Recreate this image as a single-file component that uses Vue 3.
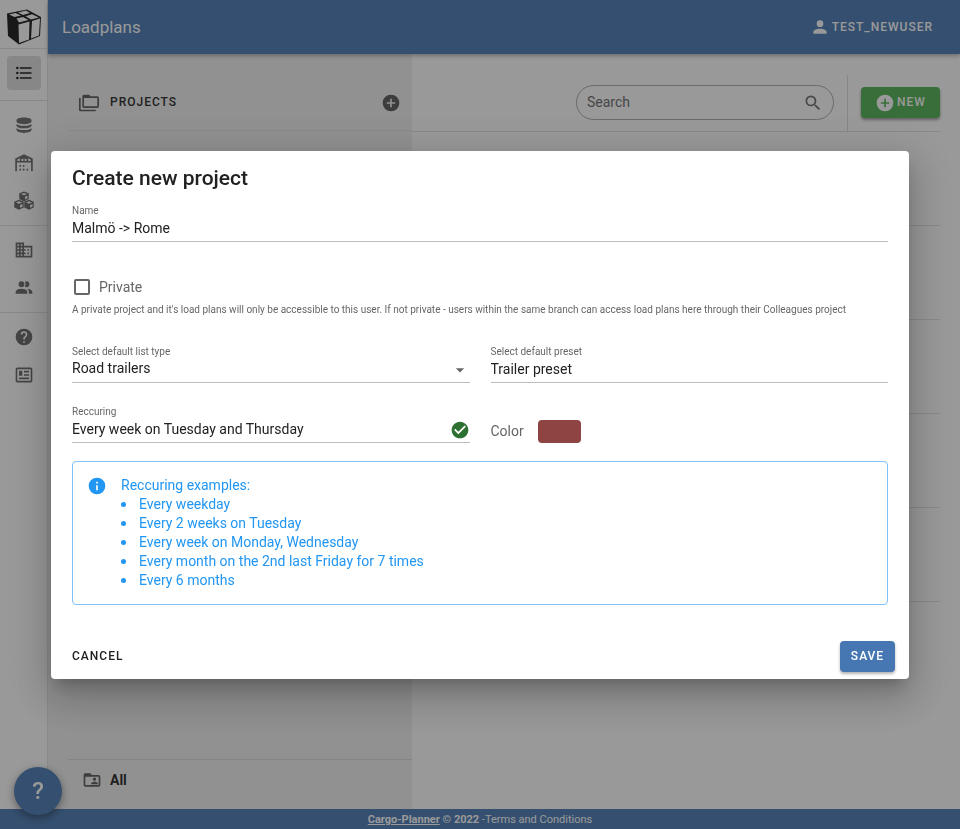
<script setup>
import { ref } from 'vue'

const circle = 'M12,2A10,10 0 0,0 2,12A10,10 0 0,0 12,22A10,10 0 0,0 22,12A10,10 0 0,0 12,2Z'
const icons = {
  plus: 'M17,13H13V17H11V13H7V11H11V7H13V11H17' + circle,
  account: 'M12,4A4,4 0 0,1 16,8A4,4 0 0,1 12,12A4,4 0 0,1 8,8A4,4 0 0,1 12,4M12,14C16.42,14 20,15.79 20,18V20H4V18C4,15.79 7.58,14 12,14Z',
  magnify: 'M9.5,3A6.5,6.5 0 0,1 16,9.5C16,11.11 15.41,12.59 14.44,13.73L14.71,14H15.5L20.5,19L19,20.5L14,15.5V14.71L13.73,14.44C12.59,15.41 11.11,16 9.5,16A6.5,6.5 0 0,1 3,9.5A6.5,6.5 0 0,1 9.5,3M9.5,5C7,5 5,7 5,9.5C5,12 7,14 9.5,14C12,14 14,12 14,9.5C14,7 12,5 9.5,5Z',
  folders: 'M22,4A2,2 0 0,1 24,6V16A2,2 0 0,1 22,18H6A2,2 0 0,1 4,16V4A2,2 0 0,1 6,2H12L14,4H22M2,6V20H20V22H2A2,2 0 0,1 0,20V6H2M6,6V16H22V6H6Z',
  check: 'M12 2C6.5 2 2 6.5 2 12S6.5 22 12 22 22 17.5 22 12 17.5 2 12 2M10 17L5 12L6.41 10.59L10 14.17L17.59 6.58L19 8L10 17Z',
  info: 'M13,9H11V7H13M13,17H11V11H13' + circle,
  folderAccount: 'M20,6H12L10,4H4A2,2 0 0,0 2,6V18A2,2 0 0,0 4,20H20A2,2 0 0,0 22,18V8A2,2 0 0,0 20,6M20,18H4V8H20V18M15,9A2,2 0 0,1 17,11A2,2 0 0,1 15,13A2,2 0 0,1 13,11A2,2 0 0,1 15,9M11,17V16C11,14.67 13.67,14 15,14C16.33,14 19,14.67 19,16V17H11Z'
}

const navGroups = [
  [
    { label: 'Data', d: 'M12 3C7 3 3 4.300 3 6.300v1.200C3 9.500 7 11 12 11s9-1.500 9-3.500V6.300C21 4.300 17 3 12 2.999ZM3 10.800v1.700C3 14.500 7 16 12 16s9-1.500 9-3.500v-1.700c-2 1.500-5.300 2.200-9 2.200s-7-.7-9-2.200ZM3 15.800v2C3 19.800 7 21.500 12 21.500s9-1.700 9-3.700v-2c-2 1.500-5.300 2.200-9 2.200s-7-.7-9-2.200Z' },
    { label: 'Warehouse', d: 'M12 1.500 1.500 6.500V22H3.500V11.500H20.500V22H22.500V6.500L12 1.500ZM4 9.500V7.800L7 6.400V9.500H4ZM9 9.500V7H11.200V9.500H9ZM12.800 9.500V7H15V9.500H12.800ZM17 9.500V6.400L20 7.800V9.500H17ZM6.500 14.500h2v2h-2v-2ZM10.500 14.500h2v2h-2v-2ZM6.500 19h2v2h-2v-2ZM10.500 19h2v2h-2v-2ZM15 19h2v2h-2v-2Z' },
    { label: 'Items', cubes: true }
  ],
  [
    { label: 'Company', d: 'M18,15H16V17H18M18,11H16V13H18M20,19H12V17H14V15H12V13H14V11H12V9H20M10,7H8V5H10M10,11H8V9H10M10,15H8V13H10M10,19H8V17H10M6,7H4V5H6M6,11H4V9H6M6,15H4V13H6M6,19H4V17H6M12,7V3H2V21H22V7H12Z' },
    { label: 'Users', d: 'M16 17V19H2V17S2 13 9 13 16 17 16 17M12.5 7.5A3.5 3.5 0 1 0 9 11A3.5 3.5 0 0 0 12.5 7.5M15.94 13A5.32 5.32 0 0 1 18 17V19H22V17S22 13.37 15.94 13M15 4A3.39 3.39 0 0 0 13.07 4.59A5 5 0 0 1 13.07 10.41A3.39 3.39 0 0 0 15 11A3.5 3.5 0 0 0 15 4Z' }
  ],
  [
    { label: 'Help', d: 'M15.07,11.25L14.17,12.17C13.45,12.89 13,13.5 13,15H11V14.5C11,13.39 11.45,12.39 12.17,11.67L13.41,10.41C13.78,10.05 14,9.55 14,9C14,7.89 13.1,7 12,7A2,2 0 0,0 10,9H8A4,4 0 0,1 12,5A4,4 0 0,1 16,9C16,9.88 15.64,10.67 15.07,11.25M13,19H11V17H13' + circle },
    { label: 'News', d: 'M20 5V19H4V5H20M20 3H4C2.89 3 2 3.89 2 5V19C2 20.11 2.89 21 4 21H20C21.11 21 22 20.11 22 19V5C22 3.89 21.11 3 20 3M18 15H6V17H18V15M10 7H6V13H10V7M12 9H18V7H12V9M18 11H12V13H18V11Z' }
  ]
]

const examples = [
  'Every weekday',
  'Every 2 weeks on Tuesday',
  'Every week on Monday, Wednesday',
  'Every month on the 2nd last Friday for 7 times',
  'Every 6 months'
]

const search = ref('')
const name = ref('Malmö -> Rome')
const isPrivate = ref(false)
const listType = ref('Road trailers')
const preset = ref('Trailer preset')
const recurring = ref('Every week on Tuesday and Thursday')
const color = ref('#8f4444')
</script>

<template>
  <div class="app">
    <aside class="rail">
      <a href="#" class="logo" aria-label="Home">
        <svg viewBox="0 0 36 36" width="36" height="36">
          <path class="ink" d="M1 4.500 21 .5 35 8 34 27 13 35.500 2 27Z" />
          <path class="face" d="M3 5.500 9.500 4 15 6.500 8.500 8ZM12 3.500 20 1.500 24 4 17 6ZM10.500 9.500 17 8 22.500 11 13 13.500ZM19.500 7.300 26 5.200 33 8.500 25 10.500Z" />
          <path class="face" d="M12.500 15.500 23.500 12.500 23 30.500 13 34ZM26 12 34 9.500 33 26.500 25 29.500Z" />
        </svg>
      </a>
      <nav class="nav">
        <div class="group">
          <a href="#" class="item active" aria-label="Loadplans">
            <svg class="icon" viewBox="0 0 24 24"><path d="M7,5H21V7H7V5M7,13V11H21V13H7M7,19V17H21V19H7M4,4.5A1.5,1.5 0 0,1 4,7.5A1.5,1.5 0 0,1 4,4.5M4,10.5A1.5,1.5 0 0,1 4,13.5A1.5,1.5 0 0,1 4,10.5M4,16.5A1.5,1.5 0 0,1 4,19.5A1.5,1.5 0 0,1 4,16.5Z" /></svg>
          </a>
        </div>
        <div v-for="(group, i) in navGroups" :key="i" class="group">
          <a v-for="item in group" :key="item.label" href="#" class="item" :aria-label="item.label">
            <svg v-if="item.cubes" class="icon cubes" viewBox="0 0 24 24">
              <g v-for="p in [[12, 2], [6, 12], [18, 12]]" :key="p[0]" :transform="`translate(${p[0]} ${p[1]})`">
                <path d="M0-1.500 5.700.8V7.700L0 10.500-5.700 7.700V.8Z" />
                <path class="cut" d="M0 .3 3.600 1.700 0 3.200-3.600 1.700ZM1.200 5 4.200 3.600V6.800L1.200 8.200Z" />
              </g>
            </svg>
            <svg v-else class="icon" viewBox="0 0 24 24"><path :d="item.d" fill-rule="evenodd" /></svg>
          </a>
        </div>
      </nav>
    </aside>

    <header class="topbar">
      <h1>Loadplans</h1>
      <button type="button" class="user">
        <svg class="icon" viewBox="0 0 24 24"><path :d="icons.account" /></svg>TEST_NEWUSER
      </button>
    </header>

    <section class="projects">
      <div class="panel-head">
        <svg class="icon" viewBox="0 0 24 24"><path :d="icons.folders" /></svg>
        <h2>PROJECTS</h2>
        <button type="button" class="add" aria-label="Add project">
          <svg class="icon" viewBox="0 0 24 24"><path :d="icons.plus" /></svg>
        </button>
      </div>
      <a href="#" class="all">
        <svg class="icon" viewBox="0 0 24 24"><path :d="icons.folderAccount" /></svg>All
      </a>
    </section>

    <main class="plans">
      <div class="tools">
        <label class="search">
          <input v-model="search" type="text" placeholder="Search" aria-label="Search" />
          <svg class="icon" viewBox="0 0 24 24"><path :d="icons.magnify" /></svg>
        </label>
        <div class="new-wrap">
          <button type="button" class="new">
            <svg class="icon" viewBox="0 0 24 24"><path :d="icons.plus" /></svg>NEW
          </button>
        </div>
      </div>
      <div v-for="n in 5" :key="n" class="plan"></div>
    </main>

    <footer class="footer">
      <a href="#"><b>Cargo-Planner</b></a>&nbsp;<b>© 2022</b>&nbsp;-<a href="#" class="terms">Terms and Conditions</a>
    </footer>

    <button type="button" class="fab" aria-label="Help">?</button>

    <div class="overlay">
      <form class="dialog" role="dialog" aria-labelledby="dialog-title" @submit.prevent>
        <h2 id="dialog-title">Create new project</h2>
        <div class="field">
          <label for="name">Name</label>
          <input id="name" v-model="name" type="text" />
        </div>

        <div class="private">
          <label class="check"><input v-model="isPrivate" type="checkbox" />Private</label>
          <p>A private project and it's load plans will only be accessible to this user. If not private - users within the same branch can access load plans here through their Colleagues project</p>
        </div>

        <div class="grid">
          <div class="field">
            <label for="type">Select default list type</label>
            <div class="control">
              <select id="type" v-model="listType"><option>Road trailers</option></select>
              <svg class="icon caret" viewBox="0 0 24 24"><path d="M7,10L12,15L17,10H7Z" /></svg>
            </div>
          </div>
          <div class="field">
            <label for="preset">Select default preset</label>
            <input id="preset" v-model="preset" type="text" />
          </div>
          <div class="field">
            <label for="recurring">Reccuring</label>
            <div class="control">
              <input id="recurring" v-model="recurring" type="text" />
              <svg class="icon ok" viewBox="0 0 24 24"><path :d="icons.check" /></svg>
            </div>
          </div>
          <div class="color">
            <label for="color">Color</label>
            <input id="color" v-model="color" type="color" />
          </div>
        </div>

        <div class="alert">
          <svg class="icon" viewBox="0 0 24 24"><path :d="icons.info" /></svg>
          <div>
            Reccuring examples:
            <ul>
              <li v-for="e in examples" :key="e">{{ e }}</li>
            </ul>
          </div>
        </div>

        <div class="actions">
          <button type="button" class="cancel">CANCEL</button>
          <button type="submit" class="save">SAVE</button>
        </div>
      </form>
    </div>
  </div>
</template>

<style>
body {
  margin: 0;
}
</style>

<style scoped>
.app {
  display: grid;
  grid-template: 54px 1fr 20px / 48px 364px 1fr;
  min-height: 100vh;
  background: #fff;
  color: #212121;
  font: 14px/19px Roboto, sans-serif;
}
.app *,
.app *::before {
  box-sizing: border-box;
}
h1,
h2,
p,
ul {
  margin: 0;
}
a {
  color: inherit;
  text-decoration: none;
}
button,
input,
select {
  font: inherit;
  color: inherit;
  border: 0;
  padding: 0;
  margin: 0;
  background: none;
  outline: none;
}
button {
  display: flex;
  align-items: center;
  justify-content: center;
  font-size: 12px;
  font-weight: 500;
  letter-spacing: 1px;
}
.icon {
  width: 20px;
  height: 20px;
  fill: currentColor;
  flex: none;
  display: block;
}

.rail {
  grid-area: 1 / 1 / 3 / 2;
  border-right: 1px solid #e2e2e2;
}
.logo {
  display: flex;
  justify-content: center;
  padding: 9px 0 4px;
  height: 49px;
  border-bottom: 1px solid #e2e2e2;
}
.ink {
  fill: #111;
}
.face {
  fill: #fff;
}
.group {
  display: flex;
  flex-direction: column;
  align-items: center;
  gap: 4px;
  padding: 7px 0;
}
.group:first-child {
  padding-bottom: 10px;
}
.group + .group {
  border-top: 1px solid #e2e2e2;
}
.item {
  display: grid;
  place-items: center;
  width: 34px;
  height: 34px;
  border-radius: 4px;
  color: #666;
}
.item.active {
  background: #dedede;
  color: #111;
}
.cubes {
  overflow: visible;
}
.cut {
  fill: #fff;
}

.topbar {
  grid-area: 1 / 2 / 2 / 4;
  display: flex;
  align-items: center;
  justify-content: space-between;
  padding: 0 27px 0 14px;
  background: #4677b3;
  color: #fff;
  box-shadow: 0 2px 4px rgba(0, 0, 0, 0.3);
  z-index: 1;
}
h1 {
  font-size: 17px;
  font-weight: 400;
}
.user {
  gap: 2px;
}

.projects {
  grid-area: 2 / 2 / 3 / 3;
  display: flex;
  flex-direction: column;
  justify-content: space-between;
  padding-left: 20px;
  background: #f0f0f0;
}
.panel-head {
  display: flex;
  align-items: center;
  gap: 11px;
  height: 77px;
  padding: 21px 11px 0 11px;
  border-bottom: 1px solid #e2e2e2;
  color: #555;
}
.panel-head h2 {
  flex: 1;
  font-size: 12px;
  font-weight: 500;
  letter-spacing: 1px;
  color: #212121;
}
.all {
  display: flex;
  gap: 8px;
  align-items: center;
  height: 50px;
  padding: 0 14px 9px;
  border-top: 1px solid #d8d8d8;
  font-weight: 700;
}
.all .icon {
  color: #555;
}

.plans {
  grid-area: 2 / 3 / 3 / 4;
  padding-right: 20px;
}
.tools {
  display: flex;
  justify-content: flex-end;
  padding-top: 21px;
  border-bottom: 1px solid #e2e2e2;
}
.search {
  display: flex;
  align-items: center;
  width: 258px;
  height: 35px;
  margin: 10px 13px 0 0;
  padding: 0 10px;
  border: 1px solid #aaa;
  border-radius: 18px;
  color: #666;
}
.search input {
  flex: 1;
  min-width: 0;
}
.search input::placeholder {
  color: #666;
  opacity: 1;
}
.new-wrap {
  height: 56px;
  padding: 12px 0 0 13px;
  border-left: 1px solid #dedede;
}
.new {
  gap: 2px;
  width: 79px;
  height: 31px;
  border-radius: 4px;
  background: #4caf50;
  color: #fff;
  box-shadow: 0 2px 3px rgba(0, 0, 0, 0.4);
}
.plan {
  height: 94px;
  border-bottom: 1px solid #e2e2e2;
}

.footer {
  grid-area: 3 / 1 / 4 / 4;
  display: flex;
  align-items: center;
  justify-content: center;
  background: #4677b3;
  color: #fff;
  font-size: 11px;
}
.footer a:first-child {
  text-decoration: underline;
}
.fab {
  position: fixed;
  left: 14px;
  bottom: 14px;
  width: 48px;
  height: 48px;
  border-radius: 50%;
  background: #4677b3;
  color: #fff;
  font-size: 24px;
  letter-spacing: 0;
  box-shadow: 0 3px 8px rgba(0, 0, 0, 0.45);
  z-index: 2;
}

.overlay {
  position: fixed;
  inset: 0;
  display: flex;
  align-items: center;
  justify-content: center;
  padding: 0 51px;
  background: rgba(33, 33, 33, 0.46);
  z-index: 3;
}
.dialog {
  width: 100%;
  padding: 15px 21px 7px;
  border-radius: 4px;
  background: #fff;
  box-shadow: 0 9px 13px -6px rgba(0, 0, 0, 0.2), 0 20px 33px 3px rgba(0, 0, 0, 0.14), 0 8px 40px 7px rgba(0, 0, 0, 0.12);
}
.dialog h2 {
  font-size: 21px;
  font-weight: 500;
  line-height: 24px;
}
.field {
  display: flex;
  flex-direction: column;
  border-bottom: 1px solid #bdbdbd;
}
.dialog > .field {
  margin-top: 14px;
}
.field label {
  padding-top: 1px;
  font-size: 10px;
  line-height: 12px;
  color: #666;
}
.field input,
.field select {
  width: 100%;
  height: 24px;
  padding-bottom: 2px;
  appearance: none;
}
.control {
  display: flex;
  align-items: center;
}
.caret {
  color: #666;
}
.ok {
  color: #2e7032;
}
.private {
  margin-top: 36px;
  color: #666;
}
.check {
  display: flex;
  align-items: center;
  gap: 9px;
  padding-left: 2px;
}
.check input {
  appearance: none;
  width: 16px;
  height: 16px;
  border: 2px solid #666;
  border-radius: 2px;
}
.private p {
  margin-top: 7px;
  font-size: 10px;
  line-height: 12px;
}
.grid {
  display: grid;
  grid-template-columns: 1fr 1fr;
  gap: 22px 21px;
  margin-top: 29px;
}
.color {
  display: flex;
  align-items: flex-end;
  gap: 14px;
  color: #666;
}
.color label {
  line-height: 24px;
}
.color input {
  width: 43px;
  height: 23px;
  border-radius: 4px;
  overflow: hidden;
  appearance: none;
}
.color input::-webkit-color-swatch-wrapper {
  padding: 0;
}
.color input::-webkit-color-swatch {
  border: 0;
}
.alert {
  display: flex;
  gap: 14px;
  margin-top: 18px;
  padding: 14px;
  border: 1px solid #7fc0f8;
  border-radius: 4px;
  color: #2196f3;
}
.alert ul {
  padding: 0;
  list-style: none;
}
.alert li {
  display: flex;
  align-items: center;
  gap: 13px;
}
.alert li::before {
  content: '';
  width: 5px;
  height: 5px;
  border-radius: 50%;
  background: currentColor;
}
.actions {
  display: flex;
  justify-content: space-between;
  margin: 36px -7px 0 0;
}
.save {
  width: 55px;
  height: 31px;
  border-radius: 4px;
  background: #4677b3;
  color: #fff;
  box-shadow: 0 2px 3px rgba(0, 0, 0, 0.3);
}
</style>
